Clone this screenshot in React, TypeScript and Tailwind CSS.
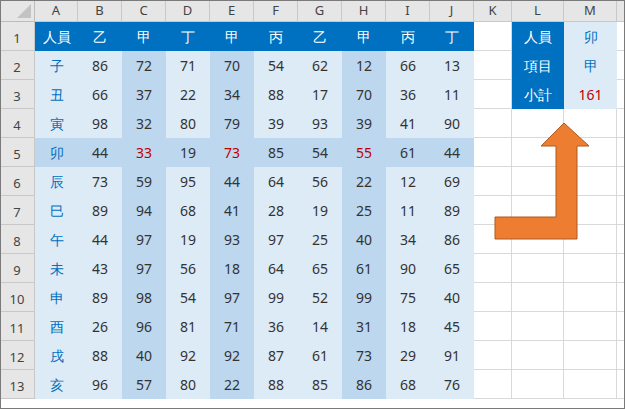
const heads = ['人員', '乙', '甲', '丁', '甲', '丙', '乙', '甲', '丙', '丁']
const rows: [string, number[]][] = [
  ['子', [86, 72, 71, 70, 54, 62, 12, 66, 13]],
  ['丑', [66, 37, 22, 34, 88, 17, 70, 36, 11]],
  ['寅', [98, 32, 80, 79, 39, 93, 39, 41, 90]],
  ['卯', [44, 33, 19, 73, 85, 54, 55, 61, 44]],
  ['辰', [73, 59, 95, 44, 64, 56, 22, 12, 69]],
  ['巳', [89, 94, 68, 41, 28, 19, 25, 11, 89]],
  ['午', [44, 97, 19, 93, 97, 25, 40, 34, 86]],
  ['未', [43, 97, 56, 18, 64, 65, 61, 90, 65]],
  ['申', [89, 98, 54, 97, 99, 52, 99, 75, 40]],
  ['酉', [26, 96, 81, 71, 36, 14, 31, 18, 45]],
  ['戌', [88, 40, 92, 92, 87, 61, 73, 29, 91]],
  ['亥', [96, 57, 80, 22, 88, 85, 86, 68, 76]],
]
const letters = ['A', 'B', 'C', 'D', 'E', 'F', 'G', 'H', 'I', 'J', 'K', 'L', 'M', '']
const darkCols = [1, 3, 6] // C, E, H within value index

const cols = 'grid-cols-[35px_43px_44px_44px_44px_44px_44px_44px_44px_44px_44px_38px_52px_53px_8px]'

export default function App() {
  const side: Record<number, [string, string, boolean]> = {
    1: ['人員', '卯', false],
    2: ['項目', '甲', false],
    3: ['小計', '161', true],
  }
  return (
    <div className="w-[625px] h-[409px] overflow-hidden bg-white relative font-['Noto_Sans_CJK_TC','Liberation_Sans',sans-serif] text-[14px] text-[#333]">
      <div className={`grid ${cols} grid-rows-[22px_repeat(13,29px)]`}>
        <div className="bg-[#e6e6e6] border-r border-b border-[#bcbcbc] relative">
          <div className="absolute right-[3px] bottom-[3px] w-0 h-0 border-l-[14px] border-l-transparent border-b-[14px] border-b-[#c3c3c3]" />
        </div>
        {letters.map((l, i) => (
          <div key={i} className="bg-[#e6e6e6] border-r border-b border-[#c8c8c8] flex items-center justify-center text-[13px] text-[#444]">{l}</div>
        ))}
        {Array.from({ length: 13 }, (_, r) => {
          const n = r + 1
          const cells = []
          cells.push(<div key="h" className="bg-[#e6e6e6] border-r border-b border-[#c8c8c8] flex items-end justify-center pb-[2px] text-[13px] text-[#444]">{n}</div>)
          if (n === 1) {
            heads.forEach((h, i) => cells.push(<div key={i} className="bg-[#0070c0] text-white flex items-center justify-center">{h}</div>))
          } else {
            const [name, vals] = rows[n - 2]
            const hl = n === 5
            cells.push(<div key="a" className={`${hl ? 'bg-[#bdd7ee]' : 'bg-[#ddebf7]'} text-[#0070c0] flex items-center justify-center`}>{name}</div>)
            vals.forEach((v, i) => {
              const dark = hl || darkCols.includes(i)
              const red = hl && darkCols.includes(i)
              cells.push(<div key={i} className={`${dark ? 'bg-[#bdd7ee]' : 'bg-[#ddebf7]'} ${red ? 'text-[#c00000]' : ''} flex items-center justify-center`}>{v}</div>)
            })
          }
          cells.push(<div key="k" className="border-r border-b border-[#d9d9d9]" />)
          const s = side[n]
          if (s) {
            cells.push(<div key="l" className="bg-[#0070c0] text-white flex items-center justify-center">{s[0]}</div>)
            cells.push(<div key="m" className={`bg-[#ddebf7] ${s[2] ? 'text-[#c00000]' : 'text-[#0070c0]'} flex items-center justify-center`}>{s[1]}</div>)
          } else {
            cells.push(<div key="l" className="border-r border-b border-[#d9d9d9]" />)
            cells.push(<div key="m" className="border-r border-b border-[#d9d9d9]" />)
          }
          cells.push(<div key="n" className="border-b border-[#d9d9d9]" />)
          return cells
        })}
      </div>
      <svg className="absolute left-0 top-0" width="625" height="409">
        <polygon points="564,123 589,146 577,146 577,239 495,239 495,217 556,217 556,146 541,146" fill="#ed7d31" stroke="#ae5a21" strokeWidth="1" />
      </svg>
      <div className="absolute inset-0 border border-[#7a7a7a] pointer-events-none" />
    </div>
  )
}
